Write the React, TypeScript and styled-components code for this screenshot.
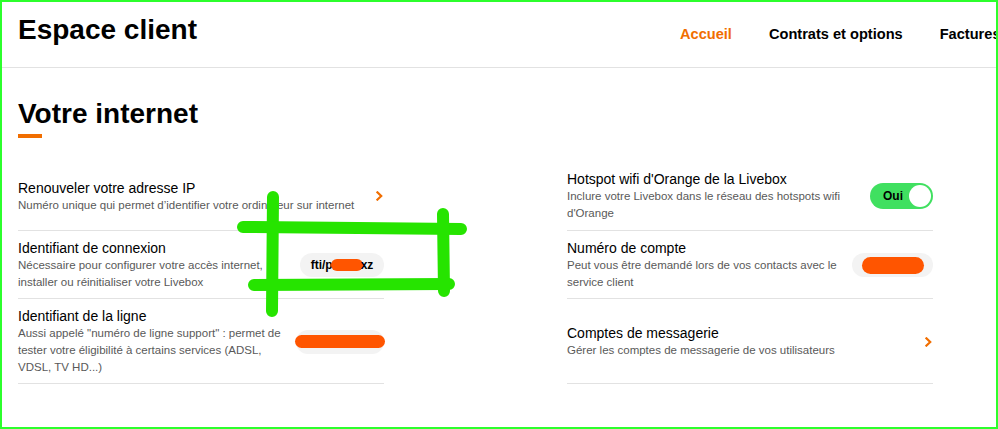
import React from "react"
import { createGlobalStyle, styled } from "styled-components"

const orange = "#f16e00"

const GlobalStyle = createGlobalStyle`
  html, body {
    margin: 0;
    padding: 0;
    background: #fff;
  }
  body {
    font-family: "Liberation Sans", Arial, Helvetica, sans-serif;
    color: #000;
  }
`

const Frame = styled.div`
  position: relative;
  width: 998px;
  height: 429px;
  box-sizing: border-box;
  border: 2px solid #2cff2c;
  overflow: hidden;
`

const Header = styled.header`
  height: 66px;
  box-sizing: border-box;
  padding: 12px 0 0 16px;
  display: grid;
  grid-template-columns: 662px 1fr;
  align-items: baseline;
  border-bottom: 1px solid #e2e2e2;
`

const BrandTitle = styled.h1`
  margin: 0;
  font-size: 28px;
  line-height: 32px;
  font-weight: 700;
  white-space: nowrap;
`

const Nav = styled.nav`
  display: flex;
  gap: 37px;
  white-space: nowrap;
`

const NavLink = styled.a<{ $active?: boolean }>`
  font-size: 14.6px;
  font-weight: 700;
  text-decoration: none;
  color: ${(p) => (p.$active ? orange : "#000")};
`

const Main = styled.main`
  padding: 30px 0 0 16px;
`

const PageTitle = styled.h2`
  margin: 0;
  font-size: 28px;
  line-height: 32px;
  font-weight: 700;
`

const TitleBar = styled.div`
  width: 24px;
  height: 4px;
  margin-top: 4px;
  background: ${orange};
`

const Grid = styled.div`
  margin-top: 23px;
  display: grid;
  grid-template-columns: 366px 366px;
  grid-template-rows: 70px auto auto;
  grid-auto-flow: column;
  column-gap: 183px;
`

const Row = styled.div`
  display: flex;
  align-items: center;
  gap: 10px;
  box-sizing: border-box;
  padding: 8px 0 7px;
  border-bottom: 1px solid #e2e2e2;
`

const RowText = styled.div`
  flex: 1;
  min-width: 0;
`

const RowTitle = styled.div`
  font-size: 14px;
  line-height: 18px;
  color: #000;
`

const RowDesc = styled.div`
  font-size: 11.5px;
  line-height: 17px;
  color: #595959;
`

const Pill = styled.div<{ $width: number }>`
  flex-shrink: 0;
  width: ${(p) => p.$width}px;
  height: 24px;
  box-sizing: border-box;
  border-radius: 12px;
  background: #f3f3f3;
  display: flex;
  align-items: center;
  justify-content: center;
  font-size: 12px;
  font-weight: 700;
  white-space: nowrap;
`

const Redaction = styled.span<{ $w: number; $h: number; $shift?: number }>`
  display: inline-block;
  width: ${(p) => p.$w}px;
  height: ${(p) => p.$h}px;
  border-radius: ${(p) => p.$h / 2}px;
  background: #ff5500;
  margin: 0 ${(p) => p.$shift ?? 0}px;
  flex-shrink: 0;
`

const Toggle = styled.div`
  flex-shrink: 0;
  width: 63px;
  height: 26px;
  box-sizing: border-box;
  border-radius: 13px;
  background: #40e060;
  display: flex;
  align-items: center;
  justify-content: space-between;
  padding: 0 2px 0 13px;
  font-size: 12px;
  font-weight: 700;
`

const Knob = styled.span`
  width: 22px;
  height: 22px;
  border-radius: 50%;
  background: #fff;
`

const Chevron = styled.svg`
  flex-shrink: 0;
  margin-right: 1px;
`

const Marks = styled.svg`
  position: absolute;
  left: -2px;
  top: -2px;
  pointer-events: none;
`

const Arrow = () => (
  <Chevron width="7" height="10" viewBox="0 0 7 10">
    <path
      d="M1.4 1.4 L5.2 5 L1.4 8.6"
      fill="none"
      stroke={orange}
      strokeWidth="2.2"
      strokeLinecap="square"
    />
  </Chevron>
)

const App = () => {
  return (
    <>
      <GlobalStyle />
      <Frame>
        <Header>
          <BrandTitle>Espace client</BrandTitle>
          <Nav>
            <NavLink $active>Accueil</NavLink>
            <NavLink>Contrats et options</NavLink>
            <NavLink>Factures et paiements</NavLink>
          </Nav>
        </Header>
        <Main>
          <PageTitle>Votre internet</PageTitle>
          <TitleBar />
          <Grid>
            <Row>
              <RowText>
                <RowTitle>Renouveler votre adresse IP</RowTitle>
                <RowDesc>
                  Numéro unique qui permet d’identifier votre ordinateur sur
                  internet
                </RowDesc>
              </RowText>
              <Arrow />
            </Row>
            <Row>
              <RowText>
                <RowTitle>Identifiant de connexion</RowTitle>
                <RowDesc>
                  Nécessaire pour configurer votre accès internet, installer ou
                  réinitialiser votre Livebox
                </RowDesc>
              </RowText>
              <Pill $width={84}>
                fti/p
                <Redaction $w={32} $h={12} $shift={-2} />
                xz
              </Pill>
            </Row>
            <Row>
              <RowText>
                <RowTitle>Identifiant de la ligne</RowTitle>
                <RowDesc>
                  Aussi appelé "numéro de ligne support" : permet de tester
                  votre éligibilité à certains services (ADSL, VDSL, TV HD...)
                </RowDesc>
              </RowText>
              <Pill $width={88}>
                <Redaction $w={90} $h={13} $shift={-1} />
              </Pill>
            </Row>

            <Row>
              <RowText>
                <RowTitle>Hotspot wifi d'Orange de la Livebox</RowTitle>
                <RowDesc>
                  Inclure votre Livebox dans le réseau des hotspots wifi
                  d'Orange
                </RowDesc>
              </RowText>
              <Toggle>
                Oui
                <Knob />
              </Toggle>
            </Row>
            <Row>
              <RowText>
                <RowTitle>Numéro de compte</RowTitle>
                <RowDesc>
                  Peut vous être demandé lors de vos contacts avec le service
                  client
                </RowDesc>
              </RowText>
              <Pill $width={81}>
                <Redaction $w={62} $h={17} $shift={-3} />
              </Pill>
            </Row>
            <Row>
              <RowText>
                <RowTitle>Comptes de messagerie</RowTitle>
                <RowDesc>
                  Gérer les comptes de messagerie de vos utilisateurs
                </RowDesc>
              </RowText>
              <Arrow />
            </Row>
          </Grid>
        </Main>

        {/* hand-drawn annotation over the screenshot */}
        <Marks width="998" height="429" viewBox="0 0 998 429">
          <g stroke="#26e400" strokeWidth="12" strokeLinecap="round" fill="none">
            <path d="M273 197 L272 311" />
            <path d="M243 227 L461 229" />
            <path d="M443 214 L444 291" />
            <path d="M254 285 L449 284" />
          </g>
        </Marks>
      </Frame>
    </>
  )
}

export default App
